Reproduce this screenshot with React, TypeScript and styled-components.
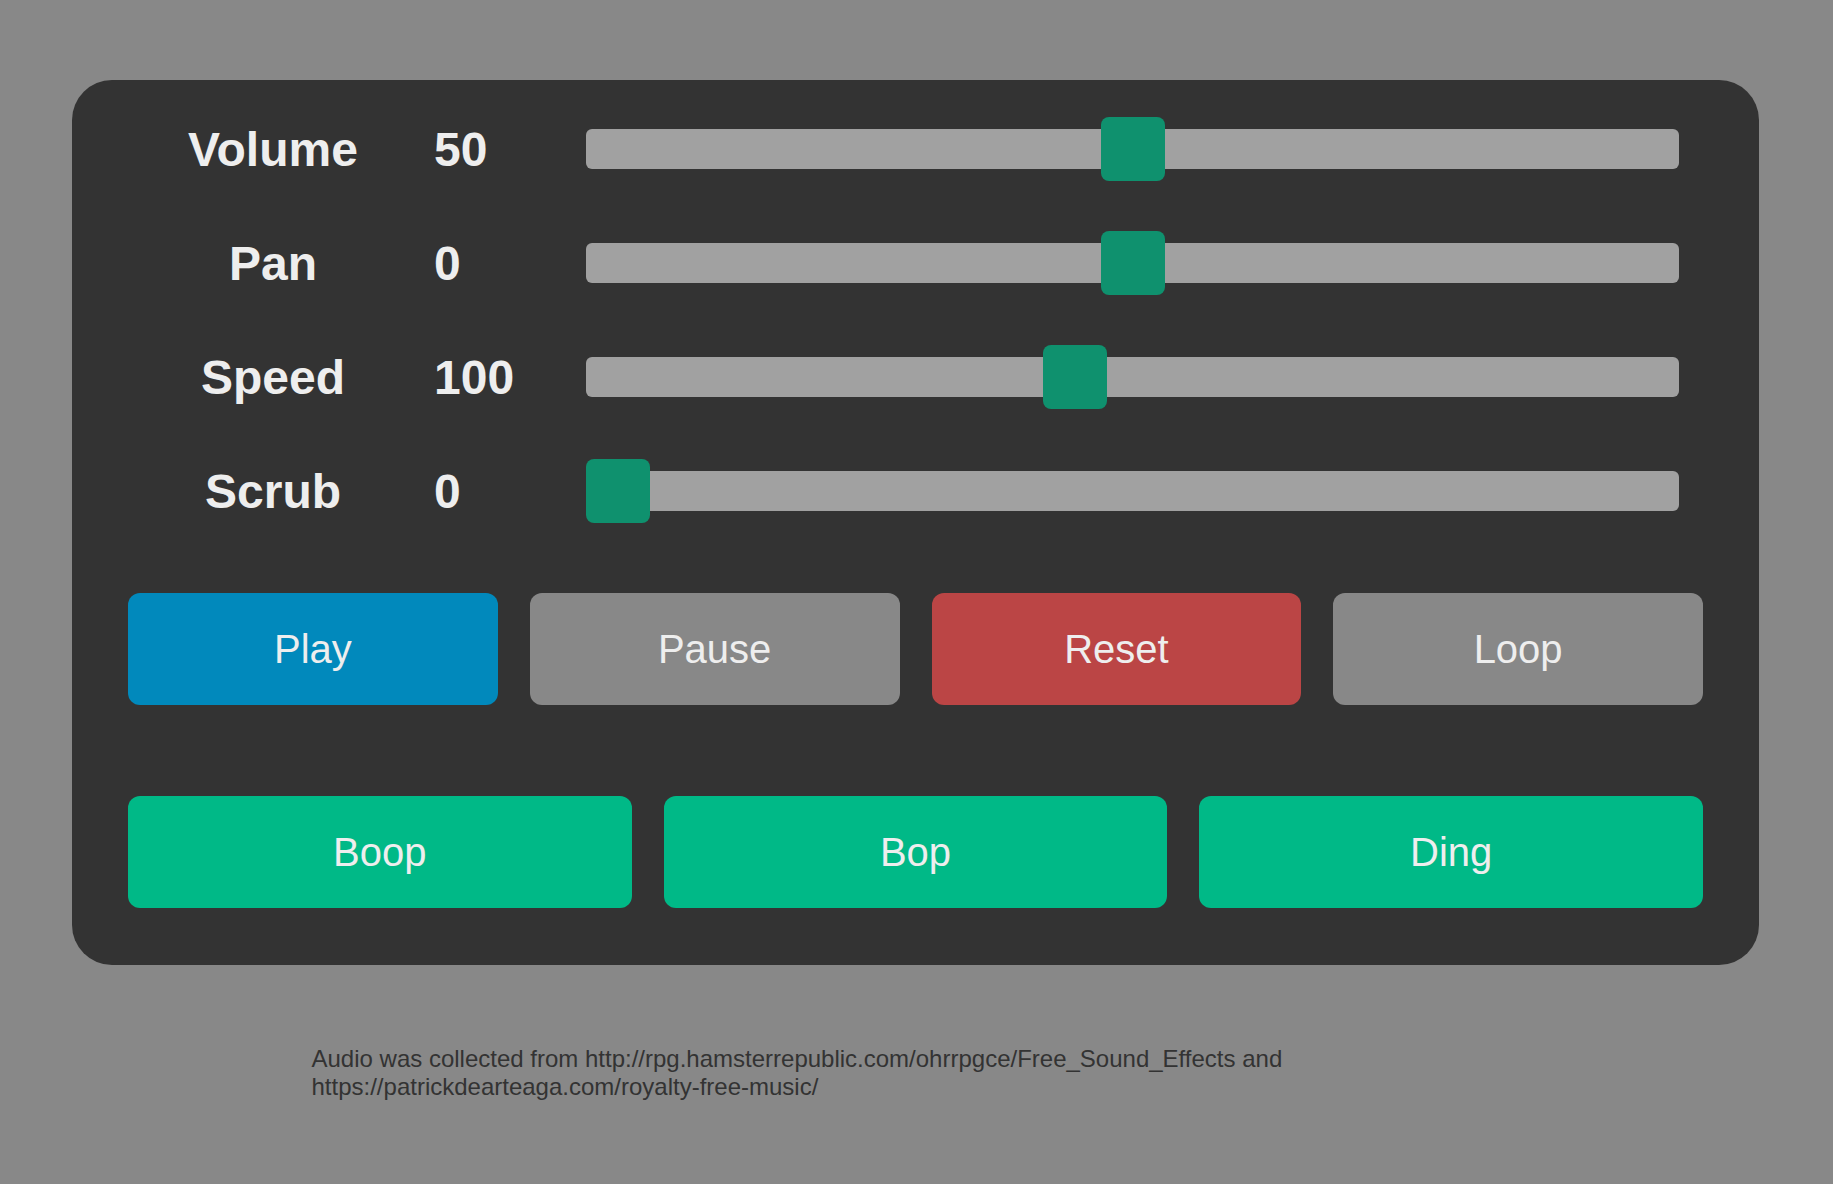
import React from "react";
import styled, { createGlobalStyle } from "styled-components";

const GlobalStyle = createGlobalStyle`
  html, body {
    margin: 0;
    padding: 0;
    background: #888888;
  }
  body {
    margin: 8px;
    font-family: "Liberation Sans", Arial, sans-serif;
  }
`;

const Page = styled.div`
  display: flex;
  flex-direction: column;
  align-items: stretch;
  padding: 72px 66px 40px 64px;
`;

const Panel = styled.div`
  background: #333333;
  border-radius: 40px;
  padding: 37px 56px 57px;
  display: flex;
  flex-direction: column;
`;

const Sliders = styled.div`
  display: flex;
  flex-direction: column;
  gap: 50px;
`;

const Row = styled.div`
  display: grid;
  grid-template-columns: 290px 168px 1fr;
  align-items: center;
  height: 64px;
  padding-right: 24px;
`;

const Label = styled.div`
  text-align: center;
  color: #eeeeee;
  font-weight: bold;
  font-size: 48px;
  line-height: 1;
  padding-top: 2px;
`;

const Value = styled.div`
  color: #eeeeee;
  font-weight: bold;
  font-size: 48px;
  line-height: 1;
  padding-left: 16px;
  padding-top: 2px;
`;

const Track = styled.div`
  position: relative;
  height: 40px;
  background: #a1a1a1;
  border-radius: 6px;
`;

const Thumb = styled.div`
  position: absolute;
  top: -12px;
  width: 64px;
  height: 64px;
  border-radius: 8px;
  background: #0f916e;
`;

const ButtonRow = styled.div<{ $cols: number; $top: number }>`
  display: grid;
  grid-template-columns: repeat(${(p) => p.$cols}, 1fr);
  gap: 32px;
  margin-top: ${(p) => p.$top}px;
`;

const Button = styled.button<{ $bg: string }>`
  height: 112px;
  border: none;
  border-radius: 12px;
  background: ${(p) => p.$bg};
  color: #eeeeee;
  font-family: "Liberation Sans", Arial, sans-serif;
  font-size: 40px;
  padding: 0;
  cursor: pointer;
`;

const Footer = styled.p`
  width: 1208px;
  margin: 80px auto 0;
  color: #333333;
  font-size: 24px;
  line-height: 28px;
`;

type SliderDef = { label: string; value: number; min: number; max: number };

const sliders: SliderDef[] = [
  { label: "Volume", value: 50, min: 0, max: 100 },
  { label: "Pan", value: 0, min: -100, max: 100 },
  { label: "Speed", value: 100, min: 20, max: 200 },
  { label: "Scrub", value: 0, min: 0, max: 100 },
];

function Slider({ label, value, min, max }: SliderDef) {
  const f = (value - min) / (max - min);
  return (
    <Row>
      <Label>{label}</Label>
      <Value>{value}</Value>
      <Track>
        <Thumb style={{ left: `calc(${f} * (100% - 64px))` }} />
      </Track>
    </Row>
  );
}

export default function App() {
  return (
    <>
      <GlobalStyle />
      <Page>
        <Panel>
          <Sliders>
            {sliders.map((s) => (
              <Slider key={s.label} {...s} />
            ))}
          </Sliders>
          <ButtonRow $cols={4} $top={70}>
            <Button $bg="#0189bc">Play</Button>
            <Button $bg="#888888">Pause</Button>
            <Button $bg="#bb4545">Reset</Button>
            <Button $bg="#888888">Loop</Button>
          </ButtonRow>
          <ButtonRow $cols={3} $top={91}>
            <Button $bg="#00b987">Boop</Button>
            <Button $bg="#00b987">Bop</Button>
            <Button $bg="#00b987">Ding</Button>
          </ButtonRow>
        </Panel>
        <Footer>
          Audio was collected from http://rpg.hamsterrepublic.com/ohrrpgce/Free_Sound_Effects and
          https://patrickdearteaga.com/royalty-free-music/
        </Footer>
      </Page>
    </>
  );
}
